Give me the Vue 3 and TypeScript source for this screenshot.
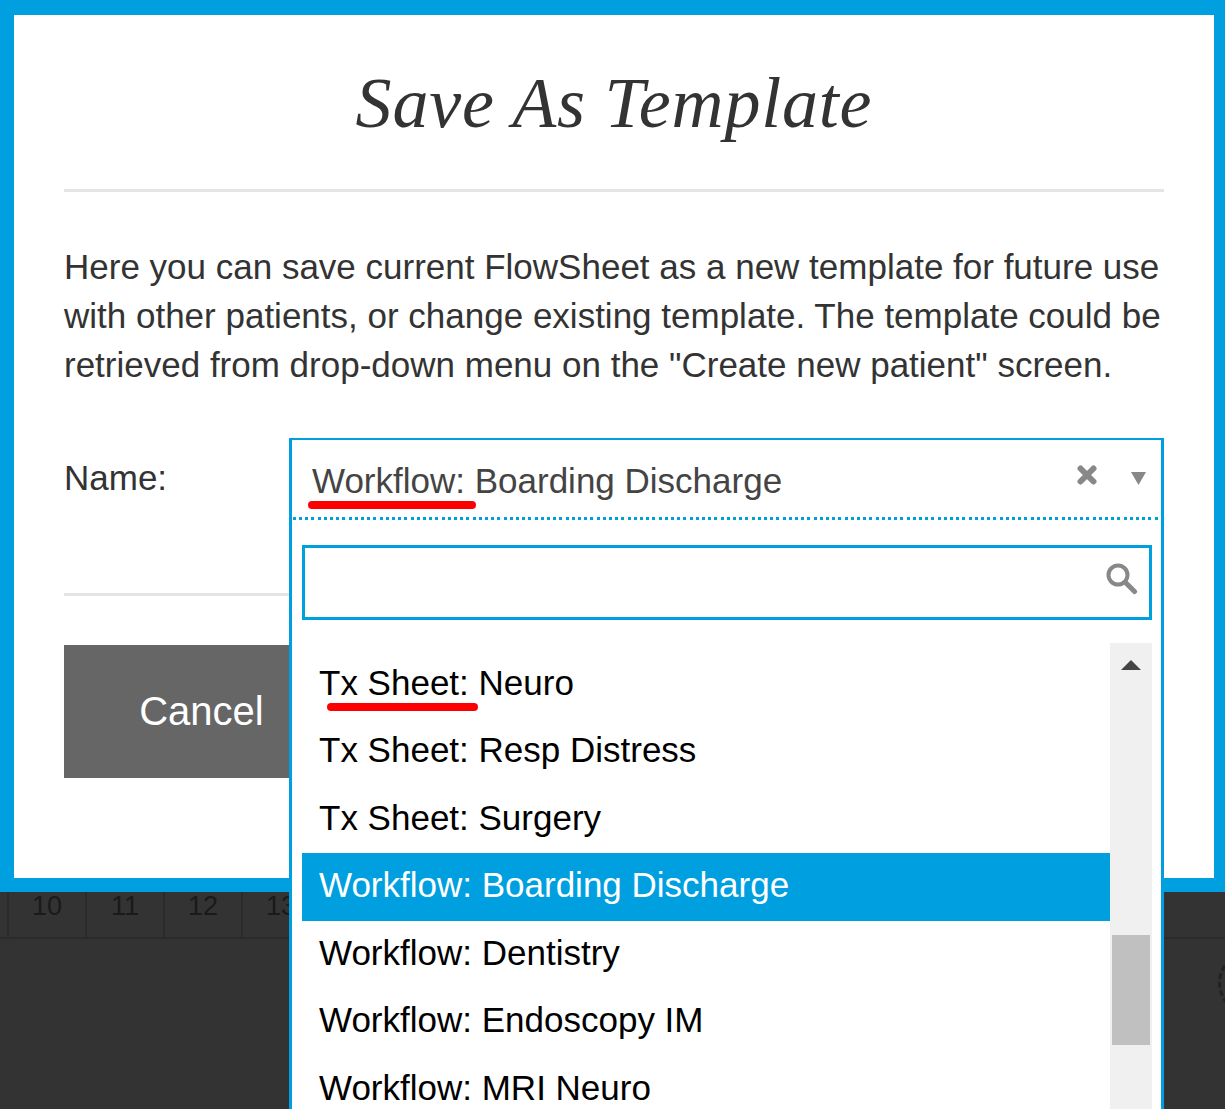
<template>
  <div class="page">
    <section class="modal">
      <h1 class="modal-title">Save As Template</h1>
      <p class="modal-text">
        Here you can save current FlowSheet as a new template for future use<br />
        with other patients, or change existing template. The template could be<br />
        retrieved from drop-down menu on the "Create new patient" screen.
      </p>

      <div class="form-row">
        <label class="form-label">Name:</label>
        <div class="select">
          <div class="select-panel">
            <div class="select-head">
              <span class="select-value"><span class="marked marked-head">Workflow:</span> Boarding Discharge</span>
              <svg class="icon-clear" width="20" height="20" viewBox="0 0 20 20">
                <path d="M3.5 3.5 L16.5 16.5 M16.5 3.5 L3.5 16.5" stroke="#888" stroke-width="6" stroke-linecap="round" fill="none" />
              </svg>
              <svg class="icon-caret" width="15" height="13" viewBox="0 0 15 13">
                <path d="M0 0 H15 L7.5 13 Z" fill="#888" />
              </svg>
            </div>

            <div class="select-body">
              <div class="search">
                <svg class="icon-search" width="32" height="32" viewBox="0 0 32 32">
                  <circle cx="12" cy="12" r="9.5" stroke="#888" stroke-width="4" fill="none" />
                  <path d="M19.5 19.5 L28.5 28.5" stroke="#888" stroke-width="5" stroke-linecap="round" />
                </svg>
              </div>

              <div class="list-wrap">
                <ul class="list">
                  <li
                    v-for="item in items"
                    :key="item.label"
                    class="list-item"
                    :class="{ 'is-active': item.label === selected }"
                  >
                    <template v-if="item.marked">
                      <span class="marked marked-item">{{ item.prefix }}</span> {{ item.rest }}
                    </template>
                    <template v-else>{{ item.label }}</template>
                  </li>
                </ul>
                <div class="scrollbar">
                  <div class="scroll-up"></div>
                  <div class="scroll-thumb"></div>
                </div>
              </div>
            </div>
          </div>
        </div>
      </div>

      <div class="modal-foot">
        <button class="btn-cancel" type="button">Cancel</button>
      </div>
    </section>

    <div class="ruler">
      <div v-for="n in hours" :key="n" class="ruler-cell">{{ n }}</div>
    </div>
    <div class="spinner"></div>
  </div>
</template>

<script setup lang="ts">
interface Item {
  label: string;
  marked?: boolean;
  prefix?: string;
  rest?: string;
}

const selected = "Workflow: Boarding Discharge";

const items: Item[] = [
  { label: "Tx Sheet: Neuro", marked: true, prefix: "Tx Sheet:", rest: "Neuro" },
  { label: "Tx Sheet: Resp Distress" },
  { label: "Tx Sheet: Surgery" },
  { label: selected },
  { label: "Workflow: Dentistry" },
  { label: "Workflow: Endoscopy IM" },
  { label: "Workflow: MRI Neuro" },
];

// the first cell only shows its right edge, the digit is off screen
const hours = ["", "10", "11", "12", "13"];
</script>

<style>
html,
body {
  margin: 0;
  background: #333;
  overflow: hidden;
}
</style>

<style scoped>
.page {
  position: relative;
  width: 1225px;
  height: 1109px;
  overflow: hidden;
  background: #333;
  font-family: "Liberation Sans", Arial, sans-serif;
}

.modal {
  position: relative;
  z-index: 2;
  box-sizing: border-box;
  height: 892px;
  padding: 0 50px;
  background: #fff;
  border-style: solid;
  border-color: #00a0e0;
  border-width: 15px 11px 14px 14px;
}

.modal-title {
  margin: 0;
  height: 177px;
  box-sizing: border-box;
  border-bottom: 3px solid #e5e5e5;
  padding-top: 50px;
  text-align: center;
  font-family: "Liberation Serif", Georgia, serif;
  font-style: italic;
  font-weight: 400;
  font-size: 72px;
  letter-spacing: 0.8px;
  line-height: 76px;
  color: #333;
}

.modal-text {
  margin: 50px 0 0;
  font-size: 35px;
  line-height: 49px;
  color: #333;
  white-space: nowrap;
}

.form-row {
  display: flex;
  height: 158px;
  margin-top: 49px;
  border-bottom: 3px solid #e5e5e5;
  box-sizing: border-box;
}

.form-label {
  width: 225px;
  padding-top: 15px;
  font-size: 35px;
  line-height: 49px;
  color: #333;
}

.select {
  position: relative;
  flex: 1;
}

.select-panel {
  position: absolute;
  top: 0;
  left: 0;
  right: 0;
  height: 671px;
  box-sizing: border-box;
  background: #fff;
  border: solid #00a0e0;
  border-width: 2px 3px 0;
}

.select-head {
  display: flex;
  align-items: center;
  height: 80px;
  box-sizing: border-box;
  padding: 1px 15px 0 20px;
  background: repeating-linear-gradient(90deg, transparent 0 0.8px, #00a0e0 0.8px 3.8px, transparent 3.8px 6.2px) left bottom / 100% 3px no-repeat;
}

.select-value {
  flex: 1;
  font-size: 35px;
  color: #444;
  white-space: nowrap;
}

.icon-clear {
  margin: -11px 34px 0 0;
}

.icon-caret {
  margin-top: -4px;
}

.select-body {
  padding: 25px 9px 0 10px;
}

.search {
  position: relative;
  height: 75px;
  box-sizing: border-box;
  border: 3px solid #00a0e0;
}

.icon-search {
  position: absolute;
  top: 15px;
  right: 11px;
}

.list-wrap {
  display: flex;
  margin-top: 23px;
}

.list {
  flex: 1;
  margin: 0;
  padding: 7.5px 0 0;
  list-style: none;
}

.list-item {
  height: 67.5px;
  padding-left: 17px;
  font-size: 35px;
  line-height: 64.5px;
  color: #000;
  white-space: nowrap;
}

.list-item.is-active {
  background: #00a0e0;
  color: #fff;
}

.marked {
  position: relative;
}

.marked::after {
  content: "";
  position: absolute;
  height: 8px;
  border-radius: 4px;
  background: #f00;
}

.marked-head::after {
  left: -4px;
  right: -11px;
  top: 40px;
}

.marked-item::after {
  left: 8px;
  right: -9px;
  top: 40px;
}

.scrollbar {
  position: relative;
  width: 42px;
  height: 466px;
  background: #f0f0f0;
}

.scroll-up {
  position: absolute;
  top: 17px;
  left: 11px;
  width: 0;
  height: 0;
  border-left: 10px solid transparent;
  border-right: 10px solid transparent;
  border-bottom: 10px solid #444;
}

.scroll-thumb {
  position: absolute;
  top: 292px;
  left: 2px;
  right: 2px;
  height: 110px;
  background: #c0c0c0;
}

.modal-foot {
  margin-top: 49px;
}

.btn-cancel {
  display: block;
  width: 275px;
  height: 133px;
  padding: 0;
  border: 0;
  background: #666;
  color: #fff;
  font-family: inherit;
  font-size: 40px;
  text-align: center;
}

.ruler {
  display: flex;
  height: 47px;
  box-sizing: border-box;
  margin-left: -69px;
  border-bottom: 2px solid #2b2b2b;
}

.ruler-cell {
  width: 78px;
  box-sizing: border-box;
  border-right: 2px solid #2b2b2b;
  text-align: center;
  font-size: 27px;
  line-height: 29px;
  color: #1a1a1a;
}

.spinner {
  position: absolute;
  top: 951px;
  left: 1218px;
  width: 64px;
  height: 64px;
  box-sizing: border-box;
  border: 3px dashed #222;
  border-radius: 50%;
}
</style>
